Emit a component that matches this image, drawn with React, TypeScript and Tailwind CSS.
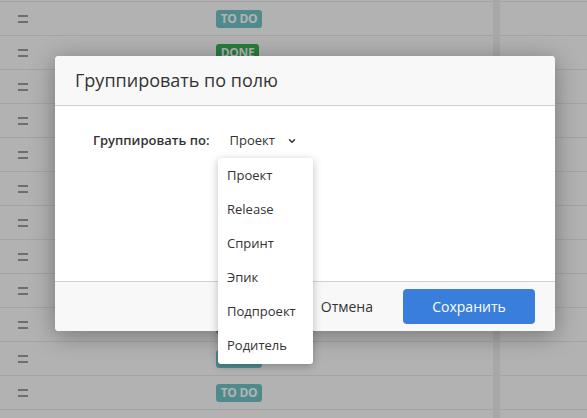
import { ChevronDown } from 'lucide-react'

type Row = { status: 'todo' | 'done' }

const rows: Row[] = [
  { status: 'todo' },
  { status: 'todo' },
  { status: 'done' },
  { status: 'todo' },
  { status: 'todo' },
  { status: 'todo' },
  { status: 'todo' },
  { status: 'todo' },
  { status: 'todo' },
  { status: 'todo' },
  { status: 'todo' },
  { status: 'todo' },
  { status: 'todo' },
  { status: 'todo' },
]

const fields = ['Проект', 'Release', 'Спринт', 'Эпик', 'Подпроект', 'Родитель']

function StatusBadge({ status }: { status: Row['status'] }) {
  if (status === 'done') {
    return (
      <span className="flex h-[18px] w-[43px] items-center justify-center rounded-[3px] bg-[#39b356] text-[12px] font-bold tracking-tight text-white">
        DONE
      </span>
    )
  }
  return (
    <span className="flex h-[18px] w-[46px] items-center justify-center rounded-[3px] bg-[#72c8cb] text-[12px] font-bold tracking-tight text-white">
      TO DO
    </span>
  )
}

export default function App() {
  return (
    <div
      className="relative h-[418px] w-full overflow-hidden bg-white"
      style={{ fontFamily: '"Open Sans", "Noto Sans", sans-serif' }}
    >
      {/* таблица задач на фоне */}
      <div className="mt-[-32px] flex">
        <div className="w-[493px]">
          {rows.map((row, i) => (
            <div key={i} className="flex h-[34px] items-center border-b border-[#ebebeb]">
              <div className="ml-[18px] flex w-[10px] flex-col gap-[4px]">
                <span className="h-[2px] w-full bg-[#9e9e9e]" />
                <span className="h-[2px] w-full bg-[#9e9e9e]" />
              </div>
              <div className="ml-[188px]">
                <StatusBadge status={row.status} />
              </div>
            </div>
          ))}
        </div>
        <div className="w-[7px] bg-[#f1f1f1]" />
        <div className="flex-1">
          {rows.map((_, i) => (
            <div key={i} className="h-[34px] border-b border-[#ebebeb]" />
          ))}
        </div>
      </div>

      {/* затемнение */}
      <div className="absolute inset-0 bg-black/30" />

      {/* модальное окно */}
      <div className="absolute left-[55px] top-[56px] w-[500px] rounded-[4px] bg-white shadow-[0_4px_24px_rgba(0,0,0,0.35)]">
        <div className="flex h-[50px] items-center rounded-t-[4px] border-b border-[#cfcfcf] bg-[#f8f8f8] pl-[20px]">
          <h2 className="text-[18px] text-[#333]">Группировать по полю</h2>
        </div>

        <div className="relative h-[175px]">
          <div className="flex items-center pl-[38px] pt-[25px]">
            <span className="text-[13px] font-semibold text-[#333]">Группировать по:</span>
            <span className="ml-[20px] text-[13px] text-[#333]">Проект</span>
            <ChevronDown className="ml-[12px] h-[10px] w-[10px] text-[#333]" strokeWidth={3.5} />
          </div>

          <ul className="absolute left-[163px] top-[52px] z-10 w-[95px] rounded-[3px] bg-white py-[1px] shadow-[0_2px_8px_rgba(0,0,0,0.25)]">
            {fields.map((f) => (
              <li key={f} className="flex h-[34px] items-center pl-[9px] text-[13px] text-[#333]">
                {f}
              </li>
            ))}
          </ul>
        </div>

        <div className="flex h-[50px] items-center justify-end gap-[30px] rounded-b-[4px] border-t border-[#cfcfcf] bg-[#f8f8f8] pr-[20px]">
          <button type="button" className="text-[14px] text-[#333]">
            Отмена
          </button>
          <button
            type="button"
            className="h-[35px] w-[132px] rounded-[4px] bg-[#3a7edb] text-[14px] text-white"
          >
            Сохранить
          </button>
        </div>
      </div>
    </div>
  )
}
